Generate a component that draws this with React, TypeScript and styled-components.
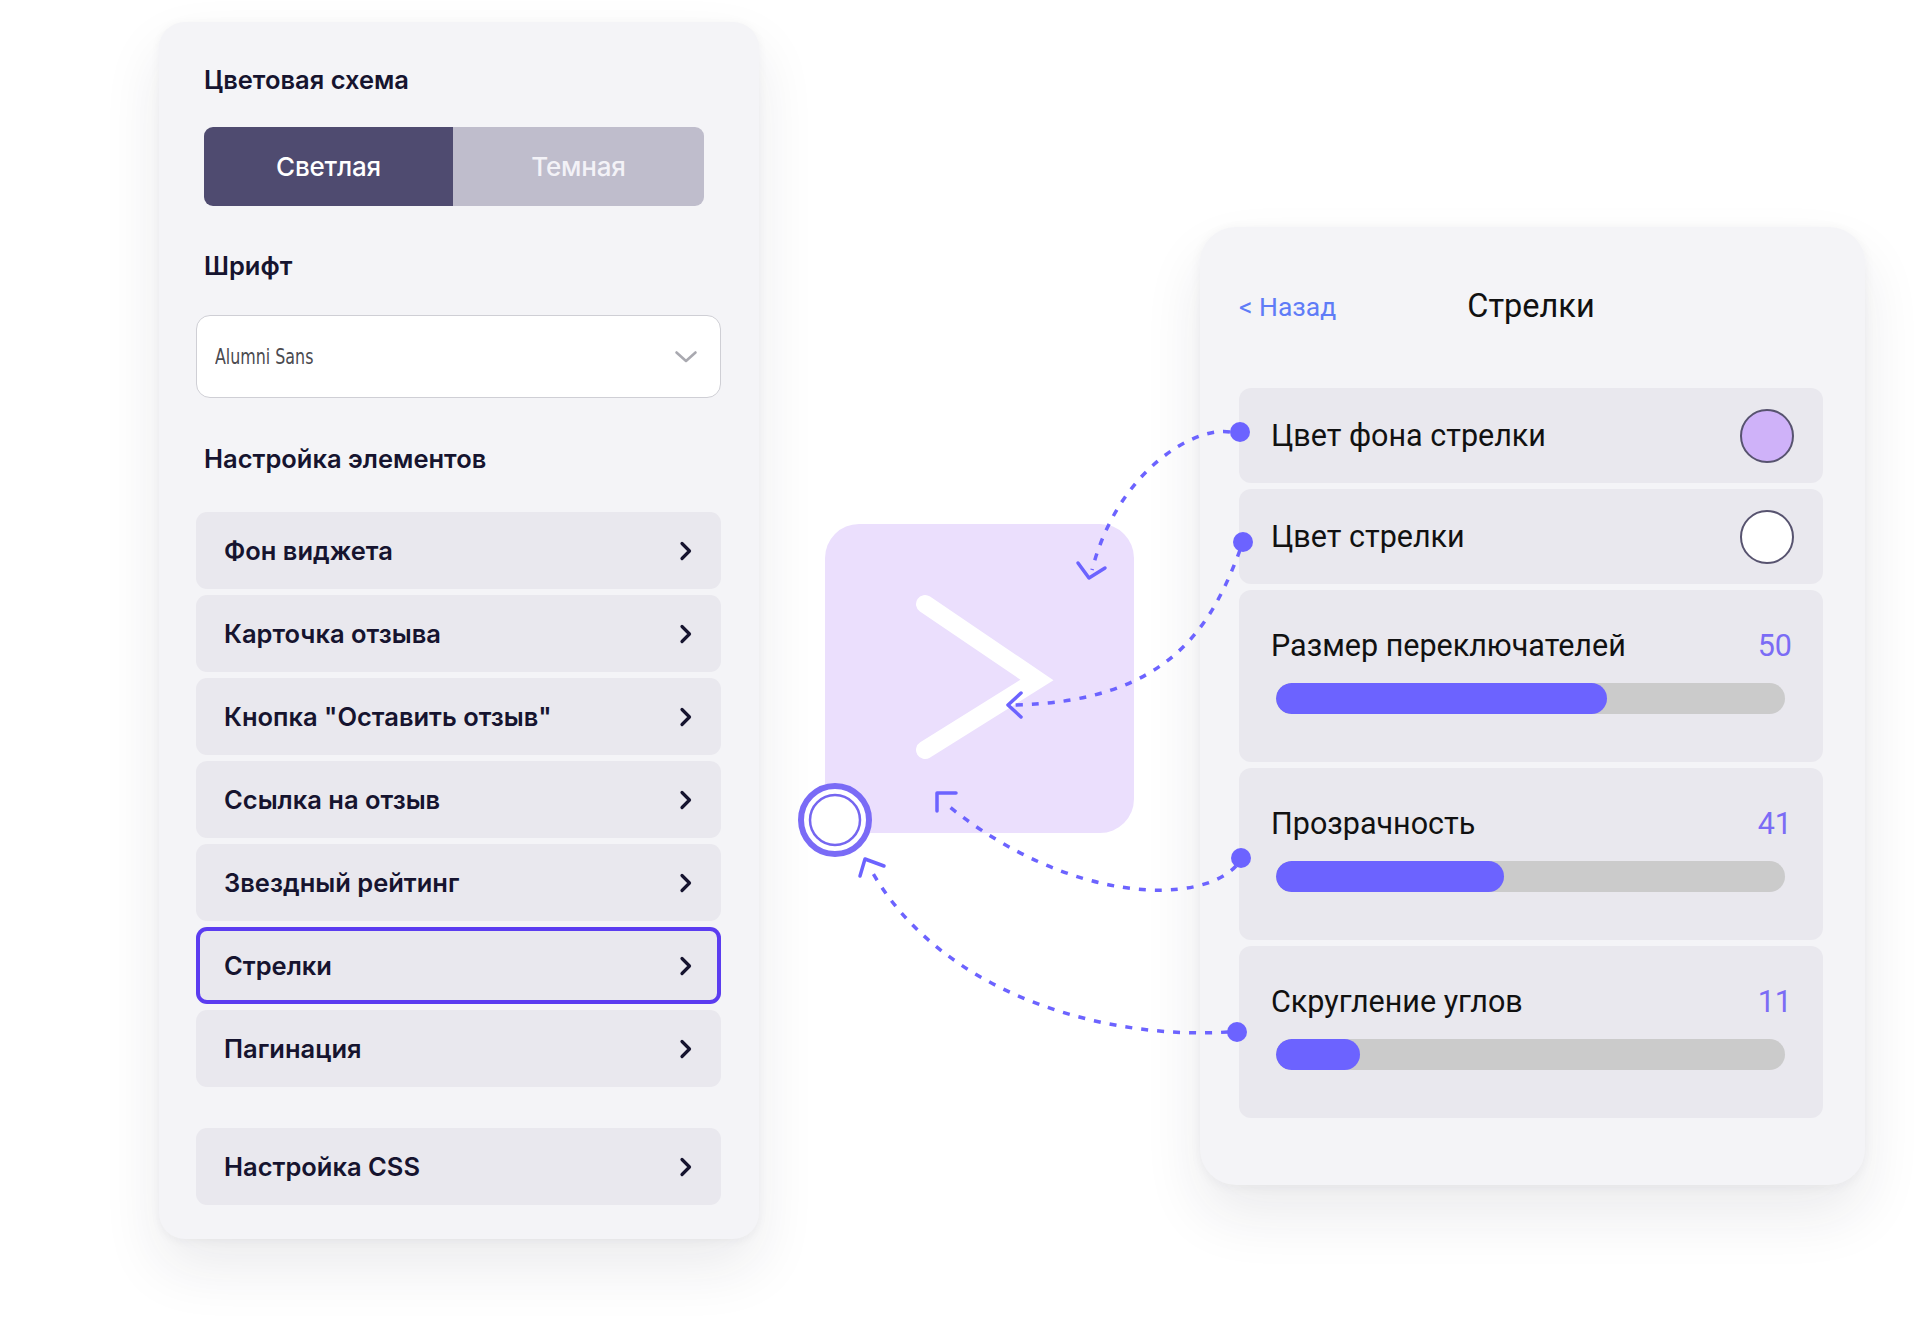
import React from "react";
import styled, { createGlobalStyle } from "styled-components";

const GlobalStyle = createGlobalStyle`
  html, body {
    margin: 0;
    padding: 0;
    background: #ffffff;
  }
  body {
    font-family: Inter, "Noto Sans", sans-serif;
  }
`;

const Page = styled.div`
  position: relative;
  width: 1920px;
  height: 1321px;
  overflow: hidden;
  box-sizing: border-box;
  padding: 22px 0 0 159px;
  display: flex;
  align-items: flex-start;
  gap: 66px;
  background: #ffffff;
`;

/* ---------- left settings panel ---------- */

const SettingsPanel = styled.div`
  width: 600px;
  box-sizing: border-box;
  padding: 43px 38px 34px 37px;
  background: #f4f4f7;
  border-radius: 26px;
  box-shadow: 0 28px 60px rgba(30, 30, 60, 0.09), 0 2px 10px rgba(30, 30, 60, 0.05);
  display: flex;
  flex-direction: column;
`;

const Heading = styled.div<{ $top: number }>`
  margin: ${(p) => p.$top}px 0 0 8px;
  font: 600 25.5px/30px Inter, "Noto Sans", sans-serif;
  color: #16142f;
  letter-spacing: 0;
`;

const Segmented = styled.div`
  margin: 32px 0 0 8px;
  width: 500px;
  height: 79px;
  display: grid;
  grid-template-columns: 249px 1fr;
  border-radius: 9px;
  overflow: hidden;
`;

const SegButton = styled.div<{ $active?: boolean }>`
  display: flex;
  align-items: center;
  justify-content: center;
  background: ${(p) => (p.$active ? "#4f4b70" : "#bfbdcc")};
  color: ${(p) => (p.$active ? "#ffffff" : "#f3f2f7")};
  font: 500 26px Inter, "Noto Sans", sans-serif;
  letter-spacing: -0.2px;
`;

const Select = styled.div`
  margin-top: 34px;
  height: 83px;
  box-sizing: border-box;
  background: #ffffff;
  border: 1.5px solid #cfcfd5;
  border-radius: 14px;
  display: flex;
  align-items: center;
  justify-content: space-between;
  padding: 0 22px 0 18px;
`;

const SelectValue = styled.span`
  font-family: "Liberation Sans Narrow", "DejaVu Sans Condensed", Roboto, sans-serif;
  font-stretch: condensed;
  font-size: 21px;
  color: #4a4a4f;
  transform: scaleX(0.84);
  transform-origin: left center;
`;

const ItemList = styled.div`
  margin-top: 38px;
  display: flex;
  flex-direction: column;
  gap: 6px;
`;

const Item = styled.div<{ $selected?: boolean; $apart?: boolean }>`
  height: 77px;
  margin-top: ${(p) => (p.$apart ? "35px" : "0")};
  box-sizing: border-box;
  border-radius: 11px;
  background: #e9e8ee;
  box-shadow: ${(p) => (p.$selected ? "inset 0 0 0 4px #5b3cf0" : "none")};
  padding: 0 28px;
  display: flex;
  align-items: center;
  justify-content: space-between;
  font: 600 25.5px Inter, "Noto Sans", sans-serif;
  letter-spacing: 0;
  color: #16142f;
`;

const ChevronRight = () => (
  <svg width="14" height="20" viewBox="0 0 14 20">
    <path d="M3 2.5 L10.5 10 L3 17.5" fill="none" stroke="#16142f" strokeWidth="3.2" strokeLinecap="round" strokeLinejoin="round" />
  </svg>
);

const ChevronDown = () => (
  <svg width="24" height="14" viewBox="0 0 24 14">
    <path d="M2.5 2.5 L12 11 L21.5 2.5" fill="none" stroke="#a9a9b0" strokeWidth="2.6" strokeLinecap="round" strokeLinejoin="round" />
  </svg>
);

/* ---------- preview ---------- */

const Preview = styled.div`
  margin-top: 502px;
  width: 309px;
  height: 309px;
  flex: none;
  border-radius: 34px;
  background: #ebdffd;
`;

/* ---------- right style panel ---------- */

const StylePanel = styled.div`
  margin-top: 205px;
  width: 665px;
  box-sizing: border-box;
  padding: 60px 42px 67px 39px;
  background: #f4f4f7;
  border-radius: 36px;
  box-shadow: 0 30px 60px rgba(30, 30, 60, 0.09), 0 2px 12px rgba(30, 30, 60, 0.05);
  font-family: Roboto, "Liberation Sans", sans-serif;
`;

const Header = styled.div`
  height: 36px;
  display: grid;
  grid-template-columns: 1fr auto 1fr;
  align-items: center;
`;

const BackLink = styled.span`
  font-size: 26.5px;
  color: #5f7cf7;
`;

const Title = styled.span`
  font-size: 32.5px;
  color: #111111;
`;

const Rows = styled.div`
  margin-top: 65px;
  display: flex;
  flex-direction: column;
  gap: 6px;
`;

const ColorRow = styled.div`
  height: 95px;
  border-radius: 12px;
  background: #e9e8ee;
  display: flex;
  align-items: center;
  justify-content: space-between;
  padding: 0 29px 0 32px;
`;

const RowLabel = styled.span`
  font-size: 30.5px;
  color: #111111;
`;

const Swatch = styled.span<{ $color: string }>`
  width: 54px;
  height: 54px;
  box-sizing: border-box;
  border-radius: 50%;
  background: ${(p) => p.$color};
  border: 2px solid #57536f;
`;

const SliderRow = styled.div`
  height: 172px;
  box-sizing: border-box;
  border-radius: 12px;
  background: #e9e8ee;
  padding: 37px 31px 0 32px;
  display: flex;
  flex-direction: column;
`;

const SliderHead = styled.div`
  height: 36px;
  display: flex;
  align-items: center;
  justify-content: space-between;
`;

const SliderValue = styled.span`
  font-size: 30.5px;
  color: #7b6cf5;
`;

const Track = styled.div`
  margin: 20px 7px 0 5px;
  height: 31px;
  border-radius: 16px;
  background: #cbcbcb;
  overflow: hidden;
`;

const Fill = styled.div`
  height: 100%;
  border-radius: 16px;
  background: #6c63ff;
`;

/* ---------- connectors overlay ---------- */

const Overlay = styled.svg`
  position: absolute;
  left: 0;
  top: 0;
  width: 1920px;
  height: 1321px;
  pointer-events: none;
`;

const Connectors = () => {
  const dash = { fill: "none", stroke: "#6c63ff", strokeWidth: 3.5, strokeDasharray: "7 9" };
  const head = { fill: "none", stroke: "#6c63ff", strokeWidth: 3.5, strokeLinecap: "round" as const, strokeLinejoin: "round" as const };
  return (
    <Overlay viewBox="0 0 1920 1321">
      {/* white chevron in preview */}
      <path d="M925 604 L1037 680 L925 750" fill="none" stroke="#ffffff" strokeWidth="18" strokeLinecap="round" strokeLinejoin="miter" />

      <path d="M1230 432 C1195 426, 1118 470, 1092 570" {...dash} />
      <path d="M1078 563 L1089 578 L1105 568" {...head} />

      <path d="M1240 550 C1212 625, 1170 702, 1014 705" {...dash} />
      <path d="M1021 693 L1008 705 L1021 717" {...head} />

      <path d="M1236 866 C1200 905, 1070 905, 946 804" {...dash} />
      <path d="M956 793 L937 793 L937 811" {...head} />

      <path d="M1228 1032 C1100 1040, 940 992, 871 870" {...dash} />
      <path d="M884 866 L865 859 L860 876" {...head} />

      <circle cx="1240" cy="432" r="10" fill="#6c63ff" />
      <circle cx="1243" cy="542" r="10" fill="#6c63ff" />
      <circle cx="1241" cy="858" r="10" fill="#6c63ff" />
      <circle cx="1237" cy="1032" r="10" fill="#6c63ff" />

      <circle cx="835" cy="820" r="34" fill="#ffffff" stroke="#7a6bf6" strokeWidth="6" />
      <circle cx="835" cy="820" r="25" fill="none" stroke="#7566f0" strokeWidth="2.5" />
    </Overlay>
  );
};

const items = [
  "Фон виджета",
  "Карточка отзыва",
  'Кнопка "Оставить отзыв"',
  "Ссылка на отзыв",
  "Звездный рейтинг",
  "Стрелки",
  "Пагинация",
];

const sliders = [
  { label: "Размер переключателей", value: 50, pct: 65 },
  { label: "Прозрачность", value: 41, pct: 44.8 },
  { label: "Скругление углов", value: 11, pct: 16.5 },
];

export default function App() {
  return (
    <>
      <GlobalStyle />
      <Page>
        <SettingsPanel>
          <Heading $top={0}>Цветовая схема</Heading>
          <Segmented>
            <SegButton $active>Светлая</SegButton>
            <SegButton>Темная</SegButton>
          </Segmented>
          <Heading $top={45}>Шрифт</Heading>
          <Select>
            <SelectValue>Alumni Sans</SelectValue>
            <ChevronDown />
          </Select>
          <Heading $top={46}>Настройка элементов</Heading>
          <ItemList>
            {items.map((name) => (
              <Item key={name} $selected={name === "Стрелки"}>
                {name}
                <ChevronRight />
              </Item>
            ))}
            <Item $apart>
              Настройка CSS
              <ChevronRight />
            </Item>
          </ItemList>
        </SettingsPanel>

        <Preview />

        <StylePanel>
          <Header>
            <BackLink>&lt; Назад</BackLink>
            <Title>Стрелки</Title>
            <span />
          </Header>
          <Rows>
            <ColorRow>
              <RowLabel>Цвет фона стрелки</RowLabel>
              <Swatch $color="#cfb2f9" />
            </ColorRow>
            <ColorRow>
              <RowLabel>Цвет стрелки</RowLabel>
              <Swatch $color="#ffffff" />
            </ColorRow>
            {sliders.map((s) => (
              <SliderRow key={s.label}>
                <SliderHead>
                  <RowLabel>{s.label}</RowLabel>
                  <SliderValue>{s.value}</SliderValue>
                </SliderHead>
                <Track>
                  <Fill style={{ width: `${s.pct}%` }} />
                </Track>
              </SliderRow>
            ))}
          </Rows>
        </StylePanel>

        <Connectors />
      </Page>
    </>
  );
}
